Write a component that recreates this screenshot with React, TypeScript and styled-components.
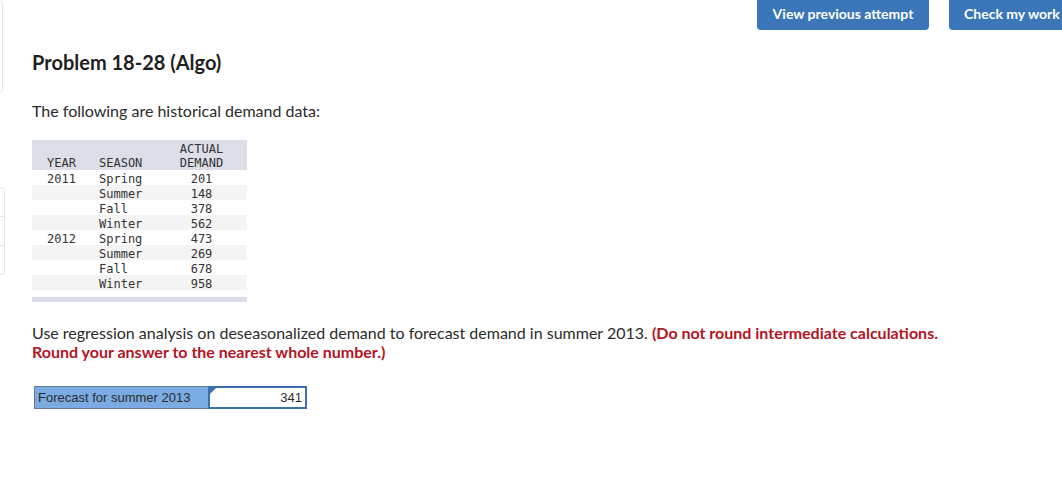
import React from "react";
import styled, { createGlobalStyle } from "styled-components";

const GlobalStyle = createGlobalStyle`
  html, body { margin: 0; padding: 0; background: #ffffff; }
  body { font-family: Lato, "Open Sans", Arial, sans-serif; color: #2b2b2b; }
`;

const Page = styled.div`
  width: 1062px;
  height: 480px;
  overflow: hidden;
  display: flex;
  flex-direction: row;
  background: #fff;
`;

const Rail = styled.div`
  width: 4px;
  flex: none;
  display: flex;
  flex-direction: column;
`;

const RailCard = styled.div<{ $h: number; $mt: number }>`
  margin-left: -20px;
  width: 23px;
  height: ${(p) => p.$h}px;
  margin-top: ${(p) => p.$mt}px;
  border: 1px solid #e6e6e6;
  border-radius: 0 4px 4px 0;
  box-sizing: border-box;
`;

const RailGroup = styled.div`
  margin-top: 94px;
  margin-left: -20px;
  width: 23px;
  display: flex;
  flex-direction: column;
  border: 1px solid #e6e6e6;
  border-radius: 0 4px 4px 0;
`;

const RailSeg = styled.div<{ $last?: boolean }>`
  height: 28px;
  border-bottom: ${(p) => (p.$last ? "none" : "1px solid #e6e6e6")};
`;

const Main = styled.div`
  flex: 1;
  display: flex;
  flex-direction: column;
  padding-left: 28px;
`;

const Toolbar = styled.div`
  display: flex;
  gap: 20px;
  padding-left: 725px;
  height: 30px;
`;

const Button = styled.button<{ $w: number; $pl?: number }>`
  flex: none;
  width: ${(p) => p.$w}px;
  height: 30px;
  border: none;
  border-radius: 0 0 4px 4px;
  background: #3a76b8;
  color: #fff;
  font-family: Lato, "Open Sans", Arial, sans-serif;
  font-weight: 700;
  font-size: 14px;
  line-height: 16px;
  text-align: ${(p) => (p.$pl != null ? "left" : "center")};
  padding: 0 0 2px ${(p) => p.$pl ?? 0}px;
  cursor: pointer;
`;

const Title = styled.h1`
  margin: 20px 0 0 0;
  font-size: 20px;
  line-height: 24px;
  font-weight: 700;
  color: #1f1f1f;
`;

const Intro = styled.p`
  margin: 27px 0 0 0;
  font-size: 16px;
  line-height: 20px;
  color: #2b2b2b;
`;

const TableWrap = styled.div`
  margin-top: 19px;
  width: 215px;
  display: flex;
  flex-direction: column;
`;

const DataTable = styled.table`
  border-collapse: collapse;
  border-spacing: 0;
  width: 215px;
  font-family: "DejaVu Sans Mono", "Liberation Mono", monospace;
  font-size: 12px;
  color: #333;
`;

const HeadRow = styled.tr`
  background: #dcdfe7;
`;

const Th = styled.th<{ $w: number; $align: string; $pl?: number }>`
  width: ${(p) => p.$w}px;
  text-align: ${(p) => p.$align};
  padding: 2px 0 0 ${(p) => p.$pl ?? 0}px;
  font-weight: 400;
  line-height: 14px;
  vertical-align: bottom;
  box-sizing: border-box;
`;

const Row = styled.tr<{ $alt: boolean }>`
  background: ${(p) => (p.$alt ? "#f4f4f4" : "#ffffff")};
`;

const Td = styled.td<{ $align: string; $pl?: number }>`
  box-sizing: border-box;
  text-align: ${(p) => p.$align};
  padding: 3px 0 0 ${(p) => p.$pl ?? 0}px;
  height: 15px;
  line-height: 12px;
  vertical-align: top;
`;

const TableFoot = styled.div`
  margin-top: 7px;
  height: 5px;
  background: #d9dce4;
`;

const Question = styled.p`
  margin: 21px 0 0 0;
  font-size: 16px;
  line-height: 19px;
  color: #2b2b2b;
  width: 990px;
`;

const Emph = styled.strong`
  color: #b3141f;
  font-weight: 700;
`;

const FormRow = styled.div`
  margin-top: 25px;
  margin-left: 2px;
  display: flex;
  height: 23px;
`;

const Label = styled.div`
  width: 174px;
  box-sizing: border-box;
  background: #7aabe2;
  border: 1px solid #6a7789;
  border-right: none;
  font-family: "Liberation Sans", Arial, sans-serif;
  font-size: 13px;
  color: #2b2b2b;
  display: flex;
  align-items: center;
  padding-left: 3px;
`;

const InputBox = styled.div`
  position: relative;
  width: 99px;
  box-sizing: border-box;
  border: 2px solid #3c6fae;
  background: #fff;
  font-family: "Liberation Sans", Arial, sans-serif;
  font-size: 13px;
  color: #2b2b2b;
  display: flex;
  align-items: center;
  justify-content: flex-end;
  padding-right: 3px;
`;

const Marker = styled.span`
  position: absolute;
  top: 0;
  left: 0;
  width: 0;
  height: 0;
  border-top: 6px solid #3c6fae;
  border-right: 6px solid transparent;
`;

const rows = [
  { year: "2011", season: "Spring", demand: "201" },
  { year: "", season: "Summer", demand: "148" },
  { year: "", season: "Fall", demand: "378" },
  { year: "", season: "Winter", demand: "562" },
  { year: "2012", season: "Spring", demand: "473" },
  { year: "", season: "Summer", demand: "269" },
  { year: "", season: "Fall", demand: "678" },
  { year: "", season: "Winter", demand: "958" },
];

export default function App() {
  return (
    <>
      <GlobalStyle />
      <Page>
        <Rail>
          <RailCard $h={94} $mt={-1} />
          <RailGroup>
            <RailSeg />
            <RailSeg />
            <RailSeg $last />
          </RailGroup>
        </Rail>
        <Main>
          <Toolbar>
            <Button $w={172}>View previous attempt</Button>
            <Button $w={130} $pl={15}>Check my work</Button>
          </Toolbar>
          <Title>Problem 18-28 (Algo)</Title>
          <Intro>The following are historical demand data:</Intro>
          <TableWrap>
            <DataTable>
              <thead>
                <HeadRow>
                  <Th $w={67} $align="left" $pl={15}>YEAR</Th>
                  <Th $w={57} $align="left">SEASON</Th>
                  <Th $w={91} $align="center">
                    ACTUAL
                    <br />
                    DEMAND
                  </Th>
                </HeadRow>
              </thead>
              <tbody>
                {rows.map((r, i) => (
                  <Row key={i} $alt={i % 2 === 1}>
                    <Td $align="left" $pl={15}>{r.year}</Td>
                    <Td $align="left">{r.season}</Td>
                    <Td $align="center">{r.demand}</Td>
                  </Row>
                ))}
              </tbody>
            </DataTable>
            <TableFoot />
          </TableWrap>
          <Question>
            Use regression analysis on deseasonalized demand to forecast demand in summer 2013.{" "}
            <Emph>
              (Do not round intermediate calculations.
              <br />
              Round your answer to the nearest whole number.)
            </Emph>
          </Question>
          <FormRow>
            <Label>Forecast for summer 2013</Label>
            <InputBox>
              <Marker />
              341
            </InputBox>
          </FormRow>
        </Main>
      </Page>
    </>
  );
}
